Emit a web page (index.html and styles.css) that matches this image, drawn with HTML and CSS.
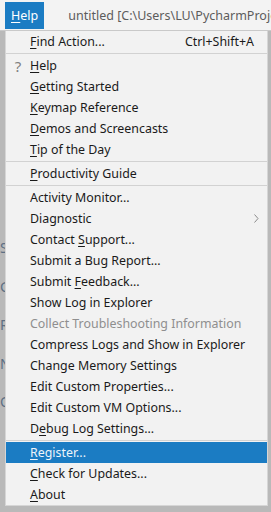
FILE: index.html
```html
<!DOCTYPE html>
<html lang="en">
<head>
    <meta charset="UTF-8">
    <title>PyCharm - Help menu</title>
    <link rel="stylesheet" href="styles.css">
</head>
<body>
    <div class="menubar">
        <div class="menubar-item active"><u>H</u>elp</div>
        <div class="title">untitled [C:\Users\LU\PycharmProjects\untitled]</div>
    </div>
    <div class="workspace">
        <div class="behind">
            <div>Se</div>
            <div>G</div>
            <div>R</div>
            <div>N</div>
            <div>O</div>
        </div>

        <div class="menu">
            <div class="item"><span><u>F</u>ind Action...</span><span class="shortcut">Ctrl+Shift+A</span></div>
            <div class="sep"></div>
            <div class="item"><span class="icon">?</span><span><u>H</u>elp</span></div>
            <div class="item"><span><u>G</u>etting Started</span></div>
            <div class="item"><span><u>K</u>eymap Reference</span></div>
            <div class="item"><span><u>D</u>emos and Screencasts</span></div>
            <div class="item"><span><u>T</u>ip of the Day</span></div>
            <div class="sep"></div>
            <div class="item"><span><u>P</u>roductivity Guide</span></div>
            <div class="sep"></div>
            <div class="item"><span>Activity Monitor...</span></div>
            <div class="item"><span>Diagnostic</span><span class="arrow">
                <svg width="5" height="9" viewBox="0 0 5 9"><path d="M0.5 0.5 L4 4.5 L0.5 8.5" fill="none" stroke="#8a8a8a" stroke-width="1"/></svg>
            </span></div>
            <div class="item"><span>Contact <u>S</u>upport...</span></div>
            <div class="item"><span>Submit a Bug Report...</span></div>
            <div class="item"><span>Submit <u>F</u>eedback...</span></div>
            <div class="item"><span>Show Log in Explorer</span></div>
            <div class="item disabled"><span>Collect Troubleshooting Information</span></div>
            <div class="item"><span>Compress Logs and Show in Explorer</span></div>
            <div class="item"><span>Change Memory Settings</span></div>
            <div class="item"><span>Edit Custom Properties...</span></div>
            <div class="item"><span>Edit Custom VM Options...</span></div>
            <div class="item"><span>D<u>e</u>bug Log Settings...</span></div>
            <div class="sep"></div>
            <div class="item selected"><span><u>R</u>egister...</span></div>
            <div class="item"><span><u>C</u>heck for Updates...</span></div>
            <div class="item"><span><u>A</u>bout</span></div>
        </div>
    </div>
</body>
</html>
```

FILE: styles.css
```css
* {
    margin: 0;
    padding: 0;
    box-sizing: border-box;
}
body {
    font-family: 'Noto Sans', 'Noto Sans CJK SC', sans-serif;
    font-size: 12.4px;
    width: 271px;
    height: 512px;
    overflow: hidden;
    background: #b9b9b9;
    color: #1a1a1a;
}
u {
    text-decoration: underline;
    text-underline-offset: 2px;
}
.menubar {
    display: flex;
    align-items: center;
    height: 31px;
    padding: 2px 0 1px 5px;
    background: #f3f3f3;
    border-bottom: 1px solid #c9c9c9;
    white-space: nowrap;
    overflow: hidden;
}
.menubar-item {
    height: 27px;
    line-height: 27px;
    padding: 0 6px;
    font-size: 12.5px;
}
.menubar-item.active {
    background: #1b7cc3;
    color: #fff;
}
.title {
    margin-left: 24px;
    font-size: 12.5px;
    color: #5c5c5c;
}
.workspace {
    position: relative;
    height: 481px;
}
.behind {
    padding-top: 207px;
    width: 5px;
    overflow: hidden;
    white-space: nowrap;
    font-size: 14px;
    color: #5d6f84;
}
.behind div {
    height: 38.5px;
}
.menu {
    position: absolute;
    top: 0;
    left: 5px;
    width: 263px;
    background: #f2f2f2;
    border: 1px solid #d6d6d6;
    border-top: none;
}
.item {
    display: flex;
    align-items: center;
    justify-content: space-between;
    position: relative;
    height: 21px;
    padding: 0 13px 0 24px;
    white-space: nowrap;
}
.item .icon {
    position: absolute;
    left: 5px;
    width: 14px;
    text-align: center;
    color: #808080;
    font-size: 15px;
}
.arrow {
    display: flex;
    margin-right: -5px;
}
.item.disabled {
    color: #8f8f8f;
}
.item.selected {
    background: #1b7cc3;
    color: #eef4fa;
}
.sep {
    height: 3px;
    padding-top: 1px;
}
.sep::before {
    content: '';
    display: block;
    height: 1px;
    background: #d2d2d2;
}
```
